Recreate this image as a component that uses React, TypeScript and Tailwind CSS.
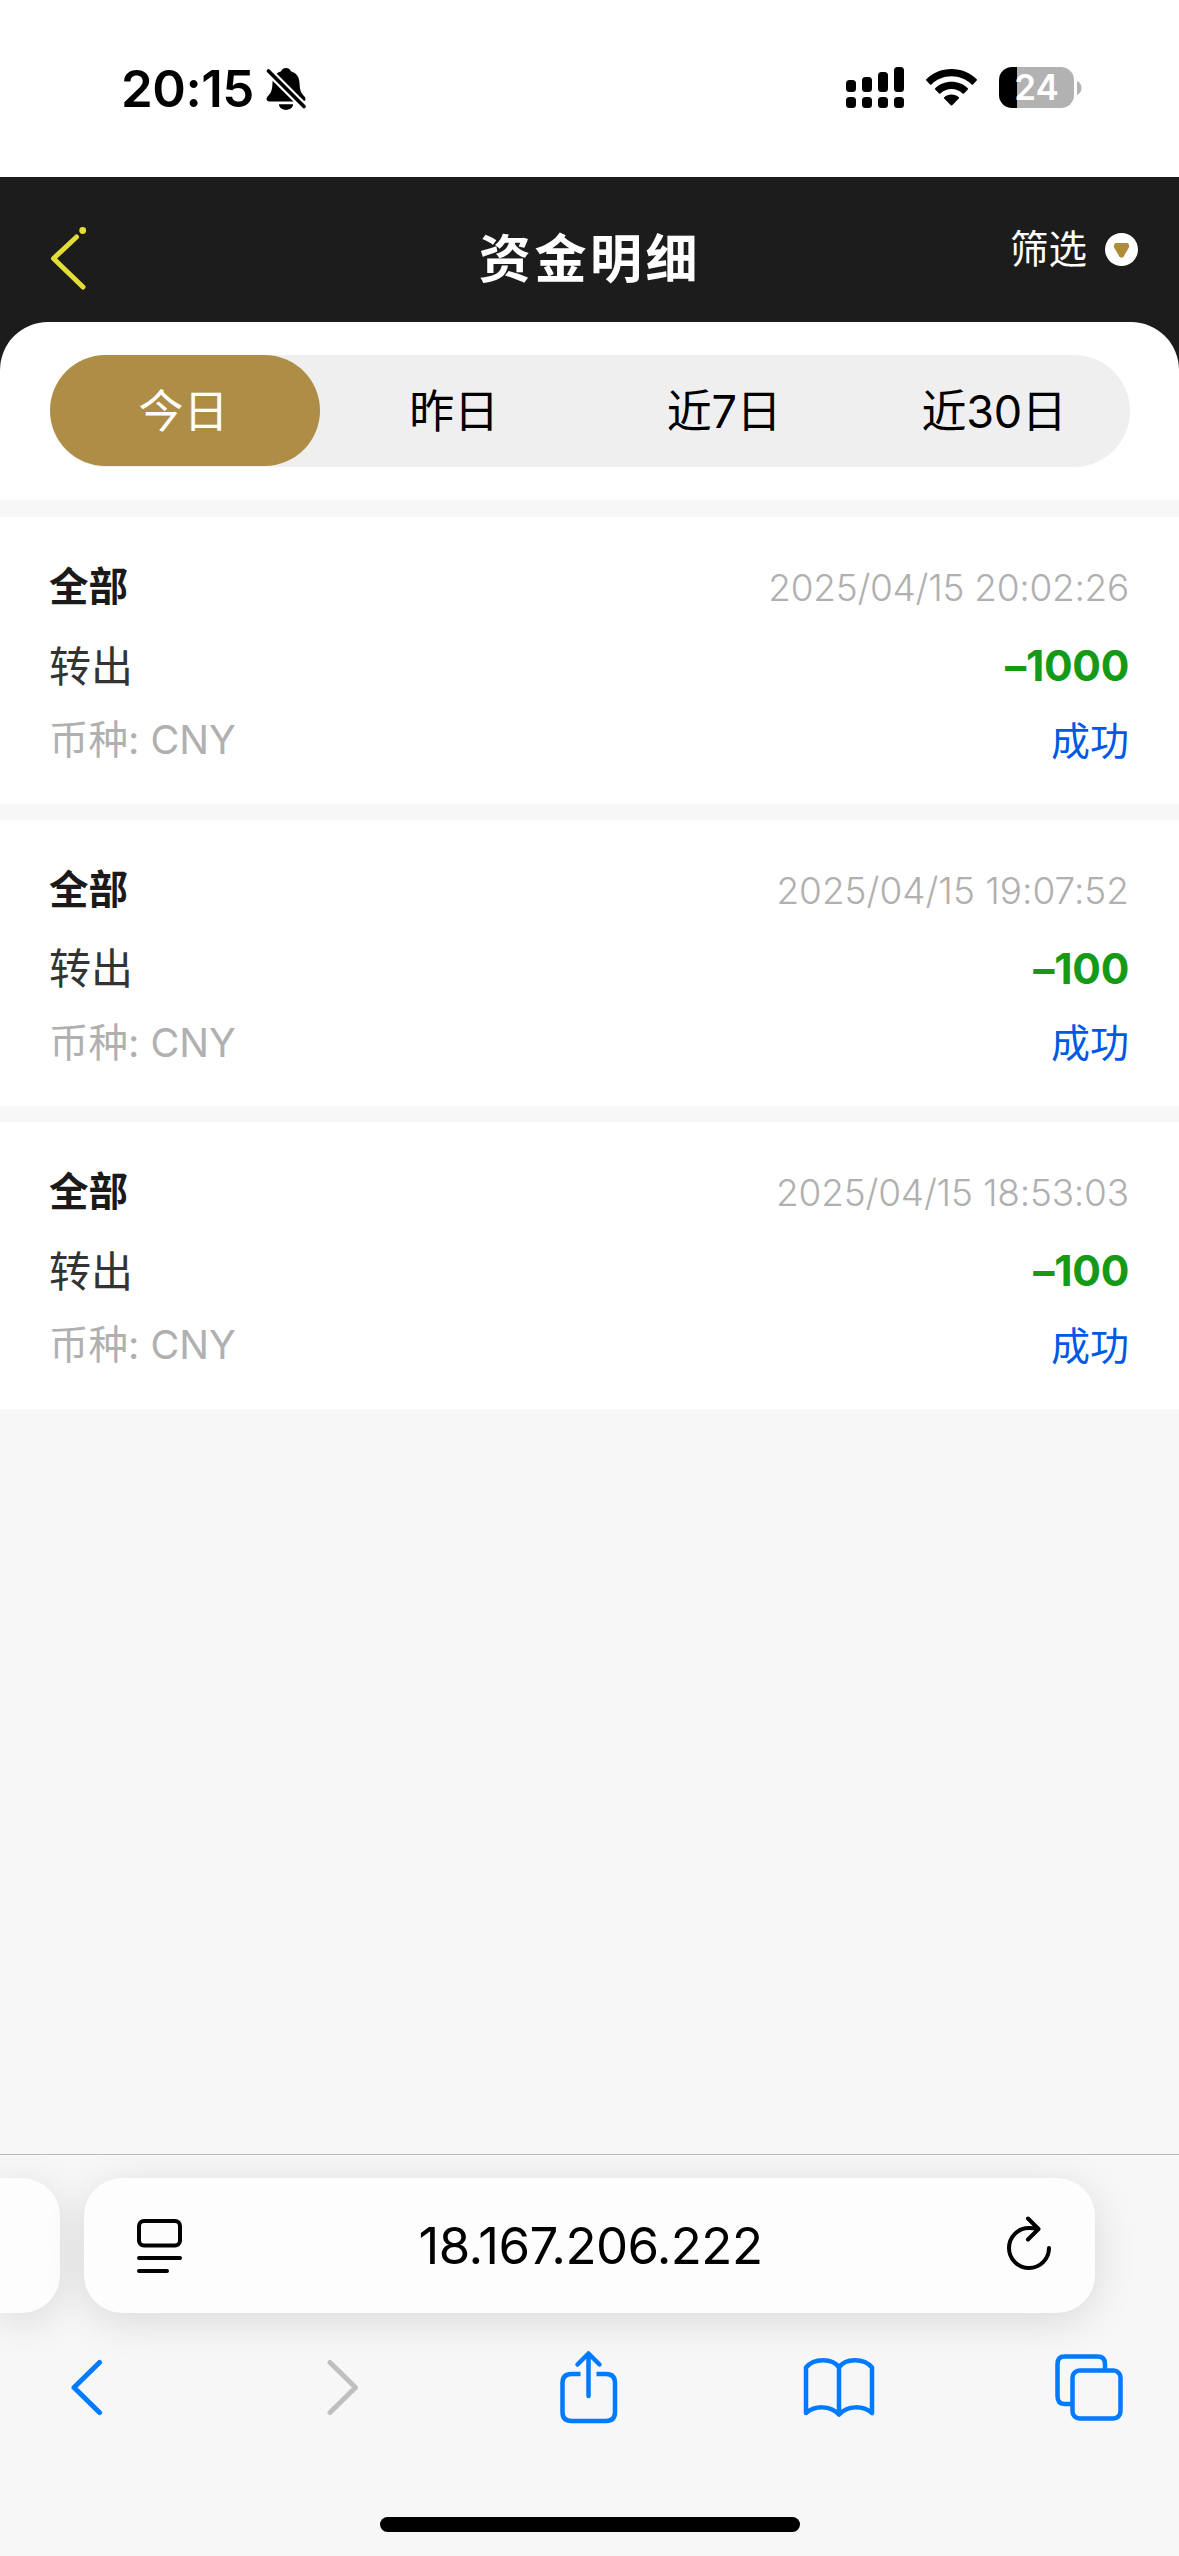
const tabs = ["今日", "昨日", "近7日", "近30日"]

const records = [
  { time: "2025/04/15 20:02:26", amount: "–1000", timeClass: "tracking-[-0.280px]" },
  { time: "2025/04/15 19:07:52", amount: "–100", timeClass: "tracking-[-0.020px]" },
  { time: "2025/04/15 18:53:03", amount: "–100", timeClass: "tracking-[-0.200px]" },
]

function BellOffIcon() {
  return (
    <svg className="ml-[12px] h-[43px] w-[40px]" viewBox="0 0 40 43">
      <path
        d="M20 1c-2.700 0-4.300 1.400-4.800 3.300C9.500 6 6.800 10 6.500 16c-.3 7.500-1.500 10-5 13.500C-.2 31.500.3 34.500 3.500 34.500h33c3.200 0 3.700-3 2-5-3.500-3.500-4.700-6-5-13.500-.3-6-3-10-8.700-11.700C24.300 2.400 22.700 1 20 1z"
        fill="#000"
      />
      <path d="M13 37.500h14c-.7 3.400-3.500 5.200-7 5.200s-6.300-1.800-7-5.200z" fill="#000" />
      <path d="M2 3.500l28 28 10 10" stroke="#fff" strokeWidth="8" fill="none" />
      <path d="M13 37.500h14c-.7 3.400-3.500 5.200-7 5.200s-6.300-1.800-7-5.200z" fill="#000" />
      <path d="M2.500 4l35.500 35.500" stroke="#000" strokeWidth="3.600" strokeLinecap="round" />
    </svg>
  )
}

function SignalIcon() {
  return (
    <svg className="h-[41px] w-[58px]" viewBox="0 0 58 41">
      <rect x="0" y="13" width="10" height="12" rx="3.500" />
      <rect x="16" y="10" width="10" height="15" rx="3.500" />
      <rect x="32" y="5" width="10" height="20" rx="3.500" />
      <rect x="48" y="0" width="10" height="25" rx="3.500" />
      <rect x="0" y="30" width="10" height="11" rx="3.500" />
      <rect x="16" y="30" width="10" height="11" rx="3.500" />
      <rect x="32" y="30" width="10" height="11" rx="3.500" />
      <rect x="48" y="30" width="10" height="11" rx="3.500" />
    </svg>
  )
}

function WifiIcon() {
  return (
    <svg className="ml-[22px] h-[37px] w-[51px]" viewBox="0 0 51 37">
      <path d="M25.500 0C35.500 0 44.500 4 50.700 10.200c.4.400.4 1 0 1.400l-3.700 3.800c-.4.400-1 .4-1.400 0C40.400 10.300 33.300 7.300 25.500 7.300S10.600 10.300 5.400 15.400c-.4.400-1 .4-1.400 0L.3 11.600c-.4-.4-.4-1 0-1.400C6.500 4 15.500 0 25.500 0z" />
      <path d="M25.500 12.800c6.300 0 12 2.400 16.300 6.400.4.400.4 1 0 1.400L38 24.400c-.4.400-1 .4-1.400 0-3-2.700-6.900-4.300-11.100-4.300s-8.100 1.600-11.100 4.300c-.4.400-1 .4-1.400 0l-3.800-3.800c-.4-.4-.4-1 0-1.400 4.300-4 10-6.400 16.300-6.400z" />
      <path d="M25.500 25.500c2.800 0 5.300 1 7.300 2.700.4.400.5 1 0 1.400l-6.600 6.700c-.4.400-1 .4-1.400 0l-6.600-6.700c-.5-.4-.4-1 0-1.400 2-1.700 4.500-2.700 7.300-2.700z" />
    </svg>
  )
}

function Battery() {
  return (
    <div className="ml-[22px] flex items-center gap-[3px]">
      <div className="flex h-[41px] w-[75px] items-center justify-center rounded-[13px] bg-[linear-gradient(to_right,#000_18px,#b2b2b2_18px)] text-[35px] leading-none font-semibold text-white">
        24
      </div>
      <svg className="h-[14px] w-[5px]" viewBox="0 0 5 14">
        <path d="M0 0c3 1.500 4.500 4 4.500 7S3 12.500 0 14z" fill="#b2b2b2" />
      </svg>
    </div>
  )
}

function StatusBar() {
  return (
    <div className="flex h-[177px] justify-between bg-white pr-[97px] pl-[121px]">
      <div className="flex h-[176px] items-center">
        <span className="text-[51px] leading-none font-semibold tracking-[-0.500px]">20:15</span>
        <BellOffIcon />
      </div>
      <div className="flex h-[175px] items-center">
        <SignalIcon />
        <WifiIcon />
        <Battery />
      </div>
    </div>
  )
}

function Header() {
  return (
    <div className="grid h-[193px] grid-cols-3 bg-[#1c1c1c] pr-[41px] pl-[50px] text-white">
      <svg className="mt-[42px] h-[72px] w-[38px]" viewBox="0 0 38 72">
        <circle cx="32.700" cy="11.500" r="3.400" fill="#e2de36" />
        <path
          d="M26.500 18L3.500 39.500 33 68"
          fill="none"
          stroke="#e2de36"
          strokeWidth="5"
          strokeLinecap="round"
          strokeLinejoin="round"
        />
      </svg>
      <h1 className="mt-[43px] pr-[8px] text-center text-[52px] leading-[80px] font-bold tracking-[3.600px] whitespace-nowrap">
        资金明细
      </h1>
      <div className="mt-[42px] flex h-[61px] items-center justify-end">
        <span className="text-[38.500px]">筛选</span>
        <svg className="ml-[18px] h-[33px] w-[33px]" viewBox="0 0 33 33">
          <circle cx="16.500" cy="16.500" r="16.500" fill="#fff" />
          <path
            d="M10.500 11h12l.8 2.500-5.800 10h-2l-5.800-10z"
            fill="#b08d35"
            stroke="#b08d35"
            strokeWidth="2"
            strokeLinejoin="round"
          />
        </svg>
      </div>
    </div>
  )
}

function DateTabs() {
  return (
    <div className="relative -mt-[48px] h-[178px] rounded-t-[48px] bg-white px-[50px] pt-[33px]">
      <div className="grid h-[112px] w-[1080px] grid-cols-4 rounded-full bg-[#efefef]">
        {tabs.map((tab, i) => (
          <button
            key={tab}
            className={
              i === 0
                ? "h-[111px] rounded-full bg-[#ae8d46] pt-[2px] pr-[3px] text-[45px] text-white"
                : "h-[111px] pt-[2px] pr-[2px] text-[45px] tracking-[-0.300px] text-black"
            }
          >
            {tab}
          </button>
        ))}
      </div>
    </div>
  )
}

function ReaderIcon() {
  return (
    <svg className="h-[54px] w-[46px]" viewBox="0 0 46 54" fill="none" stroke="#000" strokeWidth="4">
      <rect x="2" y="2" width="41" height="24.500" rx="5" />
      <path d="M2 39h41M2 52h28" strokeLinecap="round" />
    </svg>
  )
}

function ReloadIcon() {
  return (
    <svg
      className="mb-[5px] h-[54px] w-[44px]"
      viewBox="0 0 44 54"
      fill="none"
      stroke="#000"
      strokeWidth="4"
      strokeLinecap="round"
      strokeLinejoin="round"
    >
      <path d="M42 32A20 20 0 1 1 22 12C25.500 12 28 12.200 31 13" />
      <path d="M21 2.500l10.500 10.500L21 23.500" />
    </svg>
  )
}

function BrowserBar() {
  return (
    <div className="flex h-[402px] flex-col overflow-hidden border-t border-[#bababa] bg-[#f7f7f7]">
      <div className="mt-[23px] flex h-[135px] gap-[24px]">
        <div className="w-[60px] rounded-r-[38px] bg-[#fdfdfd] shadow-[0_8px_42px_rgba(0,0,0,0.12)]" />
        <div className="flex w-[1011px] items-center justify-between rounded-[38px] bg-[#fdfdfd] pr-[44px] pl-[53px] shadow-[0_8px_42px_rgba(0,0,0,0.12)]">
          <ReaderIcon />
          <span className="pr-[9px] text-[51px] leading-none tracking-[-0.600px]">18.167.206.222</span>
          <ReloadIcon />
        </div>
      </div>
      <div className="mt-[35px] flex h-[78px] items-center pl-[68px] [&>svg]:shrink-0 [&>svg]:fill-none [&>svg]:stroke-[#007aff] [&>svg]:stroke-[4.500px]">
        <svg className="h-[58px] w-[36px] stroke-[5px]!" viewBox="0 0 36 58" strokeLinecap="round" strokeLinejoin="round">
          <path d="M31.500 4.500L6 29.500l25.500 25" />
        </svg>
        <svg
          className="ml-[220px] h-[58px] w-[36px] stroke-[#bfbfbf]! stroke-[5px]!"
          viewBox="0 0 36 58"
          strokeLinecap="round"
          strokeLinejoin="round"
        >
          <path d="M6 4.500L31.500 29.500 6 54.500" />
        </svg>
        <svg className="ml-[200px] h-[76px] w-[58px]" viewBox="0 0 58 76">
          <path d="M20.500 25H11.500Q2.500 25 2.500 34V63Q2.500 72 11.500 72H46Q55 72 55 63V34Q55 25 46 25H36.500" />
          <path d="M28.500 5V47M17.500 15.500L28.500 4.500 39.500 15.500" strokeLinecap="round" strokeLinejoin="round" />
        </svg>
        <svg className="ml-[185px] h-[60px] w-[72px]" viewBox="0 0 72 60" strokeLinejoin="round">
          <path d="M36 10.500C30 1 11 .5 3 10.500V56C12 48.500 27 48 36 57.500 45 48 60 48.500 69 56V10.500C61 .5 42 1 36 10.500zM36 10.500V57" />
        </svg>
        <svg className="ml-[180px] h-[68px] w-[68px]" viewBox="0 0 68 68">
          <rect x="17.500" y="17.500" width="48" height="48" rx="7" />
          <path d="M50 17.500V11Q50 3.500 42.500 3.500H9.500Q2.500 3.500 2.500 11V43Q2.500 51 9.500 51H17.500" />
        </svg>
      </div>
      <div className="mx-auto mt-[91px] h-[15px] w-[420px] shrink-0 rounded-full bg-black" />
    </div>
  )
}

export default function App() {
  return (
    <div className="flex h-[2556px] w-[1179px] flex-col overflow-hidden bg-[#f7f7f7] font-['Inter','Noto_Sans_CJK_SC',sans-serif] text-black">
      <StatusBar />
      <Header />
      <DateTabs />

      {/* Records */}
      <div className="mt-[17px] flex grow flex-col gap-[16px]">
        {records.map((record) => (
          <div key={record.time} className="h-[286.500px] bg-white pt-[36px] pr-[50px] pl-[49px]">
            <div className="flex h-[70px] items-center justify-between">
              <span className="text-[39.500px] font-bold text-[#1a1a1a]">全部</span>
              <span className={`text-[37px] font-[350] text-[#b0b0b0] ${record.timeClass}`}>{record.time}</span>
            </div>
            <div className="flex h-[86px] items-center justify-between">
              <span className="text-[42px] text-[#333]">转出</span>
              <span className="text-[42.500px] font-bold tracking-[-0.300px] text-[#159a17]">{record.amount}</span>
            </div>
            <div className="flex h-[64px] items-center justify-between">
              <span className="text-[39.500px] text-[#b0b0b0]">币种: CNY</span>
              <span className="text-[39px] text-[#0058e6]">成功</span>
            </div>
          </div>
        ))}
      </div>

      <BrowserBar />
    </div>
  )
}
